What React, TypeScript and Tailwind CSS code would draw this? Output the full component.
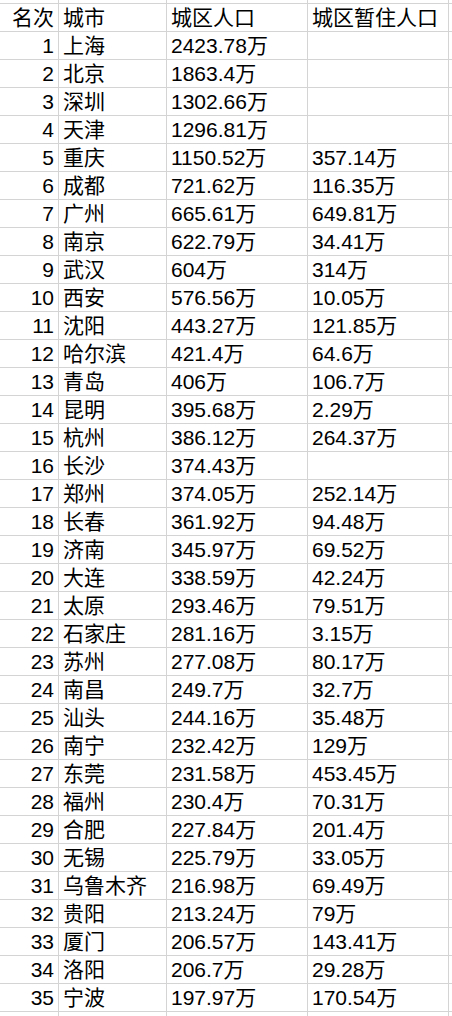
const rows: [number, string, string, string][] = [
  [1, '上海', '2423.78万', ''],
  [2, '北京', '1863.4万', ''],
  [3, '深圳', '1302.66万', ''],
  [4, '天津', '1296.81万', ''],
  [5, '重庆', '1150.52万', '357.14万'],
  [6, '成都', '721.62万', '116.35万'],
  [7, '广州', '665.61万', '649.81万'],
  [8, '南京', '622.79万', '34.41万'],
  [9, '武汉', '604万', '314万'],
  [10, '西安', '576.56万', '10.05万'],
  [11, '沈阳', '443.27万', '121.85万'],
  [12, '哈尔滨', '421.4万', '64.6万'],
  [13, '青岛', '406万', '106.7万'],
  [14, '昆明', '395.68万', '2.29万'],
  [15, '杭州', '386.12万', '264.37万'],
  [16, '长沙', '374.43万', ''],
  [17, '郑州', '374.05万', '252.14万'],
  [18, '长春', '361.92万', '94.48万'],
  [19, '济南', '345.97万', '69.52万'],
  [20, '大连', '338.59万', '42.24万'],
  [21, '太原', '293.46万', '79.51万'],
  [22, '石家庄', '281.16万', '3.15万'],
  [23, '苏州', '277.08万', '80.17万'],
  [24, '南昌', '249.7万', '32.7万'],
  [25, '汕头', '244.16万', '35.48万'],
  [26, '南宁', '232.42万', '129万'],
  [27, '东莞', '231.58万', '453.45万'],
  [28, '福州', '230.4万', '70.31万'],
  [29, '合肥', '227.84万', '201.4万'],
  [30, '无锡', '225.79万', '33.05万'],
  [31, '乌鲁木齐', '216.98万', '69.49万'],
  [32, '贵阳', '213.24万', '79万'],
  [33, '厦门', '206.57万', '143.41万'],
  [34, '洛阳', '206.7万', '29.28万'],
  [35, '宁波', '197.97万', '170.54万'],
];

const cell = 'h-[28px] border-r border-b border-[#d4d4d4] flex items-end pb-[1px] leading-[24px] whitespace-nowrap overflow-hidden';
const top = 'h-[4px] border-r border-b border-[#d4d4d4]';

function Row({ cells, isTop }: { cells: string[]; isTop?: boolean }) {
  if (isTop) {
    return (
      <>
        <div className={top} />
        <div className={top} />
        <div className={top} />
        <div className={top} />
        <div className="h-[4px] border-b border-[#d4d4d4]" />
      </>
    );
  }
  return (
    <>
      <div className={`${cell} justify-end pr-[4px]`}>{cells[0]}</div>
      <div className={`${cell} pl-[4px]`}>{cells[1]}</div>
      <div className={`${cell} pl-[4px]`}>{cells[2]}</div>
      <div className={`${cell} pl-[4px]`}>{cells[3]}</div>
      <div className="h-[28px] border-b border-[#d4d4d4]" />
    </>
  );
}

export default function App() {
  return (
    <div className="w-[452px] h-[1016px] overflow-hidden bg-white text-black text-[21px] font-['Liberation_Sans','Noto_Sans_CJK_SC',sans-serif]">
      <div className="grid grid-cols-[59px_108px_141px_141px_1fr]">
        <Row cells={[]} isTop />
        <Row cells={['名次', '城市', '城区人口', '城区暂住人口']} />
        {rows.map((r) => (
          <Row key={r[0]} cells={[String(r[0]), r[1], r[2], r[3]]} />
        ))}
        <Row cells={['', '', '', '']} />
      </div>
    </div>
  );
}
